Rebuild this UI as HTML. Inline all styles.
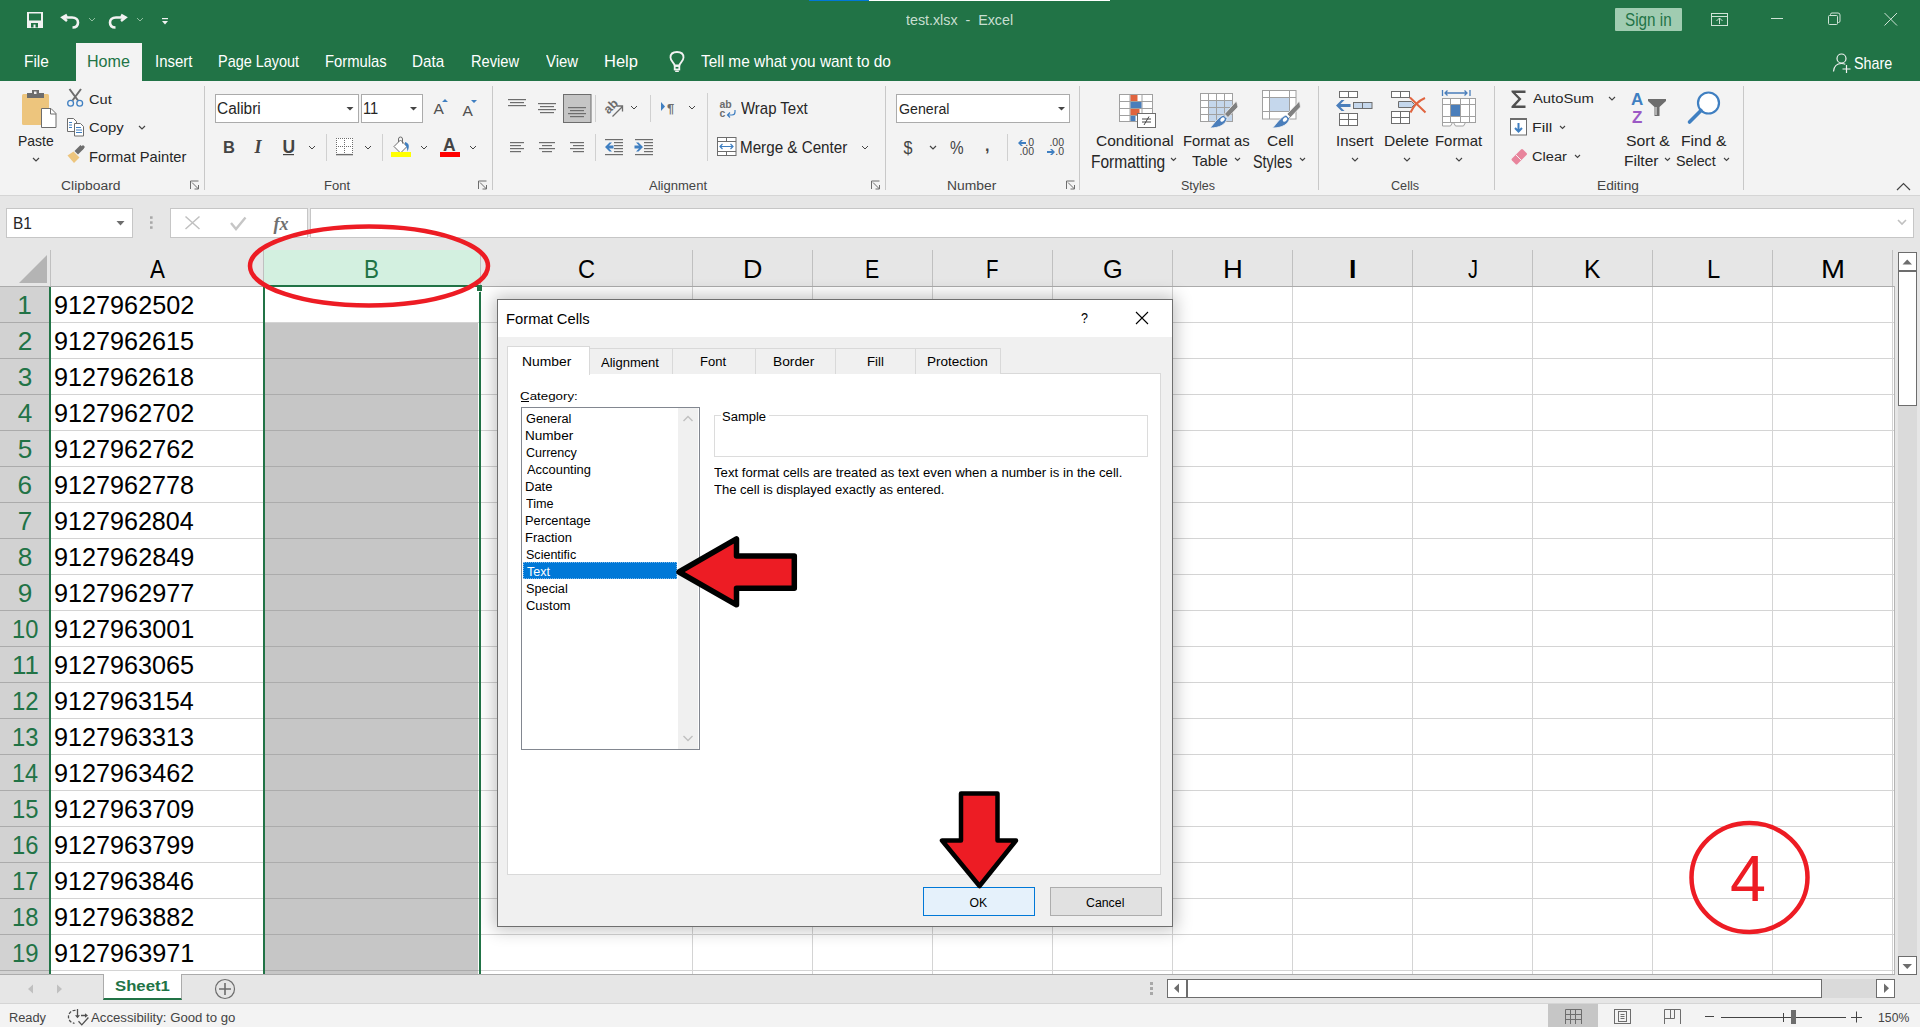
<!DOCTYPE html>
<html><head><meta charset="utf-8"><title>Excel - Format Cells</title>
<style>
html,body{margin:0;padding:0;width:1920px;height:1027px;overflow:hidden;background:#fff;position:relative;font-family:"Liberation Sans",sans-serif}
.t{position:absolute;line-height:0;white-space:nowrap;transform-origin:0 0}
svg{overflow:visible}
</style></head><body>
<div style="position:absolute;left:0px;top:0px;width:1920px;height:81px;background:#217346;"></div>
<div style="position:absolute;left:809px;top:0px;width:60px;height:1px;background:#0078d7;"></div>
<div style="position:absolute;left:869px;top:0px;width:241px;height:1px;background:#ffffff;"></div>
<div style="position:absolute;left:76px;top:43px;width:66px;height:38px;background:#f3f3f3;"></div>
<div style="position:absolute;left:1615px;top:8px;width:67px;height:23px;background:#a0ccb1;border-radius:1px"></div>
<div style="position:absolute;left:0px;top:81px;width:1920px;height:114px;background:#f3f3f3;"></div>
<div style="position:absolute;left:0px;top:195px;width:1920px;height:1px;background:#d5d5d5;"></div>
<div style="position:absolute;left:204px;top:86px;width:1px;height:104px;background:#c8c8c8;"></div>
<div style="position:absolute;left:492px;top:86px;width:1px;height:104px;background:#c8c8c8;"></div>
<div style="position:absolute;left:885px;top:86px;width:1px;height:104px;background:#c8c8c8;"></div>
<div style="position:absolute;left:1079px;top:86px;width:1px;height:104px;background:#c8c8c8;"></div>
<div style="position:absolute;left:1318px;top:86px;width:1px;height:104px;background:#c8c8c8;"></div>
<div style="position:absolute;left:1494px;top:86px;width:1px;height:104px;background:#c8c8c8;"></div>
<div style="position:absolute;left:1743px;top:86px;width:1px;height:104px;background:#c8c8c8;"></div>
<div style="position:absolute;left:215px;top:94px;width:142px;height:27px;background:#fff;border:1px solid #ababab"></div>
<div style="position:absolute;left:361px;top:94px;width:60px;height:27px;background:#fff;border:1px solid #ababab"></div>
<div style="position:absolute;left:896px;top:94px;width:172px;height:27px;background:#fff;border:1px solid #ababab"></div>
<div style="position:absolute;left:0px;top:196px;width:1920px;height:91px;background:#e6e6e6;"></div>
<div style="position:absolute;left:6px;top:208px;width:125px;height:28px;background:#fff;border:1px solid #c6c6c6"></div>
<div style="position:absolute;left:170px;top:208px;width:136px;height:28px;background:#fff;border:1px solid #c6c6c6"></div>
<div style="position:absolute;left:310px;top:208px;width:1602px;height:28px;background:#fff;border:1px solid #c6c6c6"></div>
<div style="position:absolute;left:50px;top:287px;width:1844px;height:687px;background:#ffffff;"></div>
<div style="position:absolute;left:0px;top:287px;width:49px;height:687px;background:#d2d2d2;"></div>
<div style="position:absolute;left:264px;top:250px;width:216px;height:36px;background:#d3f0e0;"></div>
<div style="position:absolute;left:265px;top:323px;width:213px;height:651px;background:#c6c6c6;"></div>
<div style="position:absolute;left:263px;top:250px;width:1px;height:36px;background:#c0c0c0;"></div>
<div style="position:absolute;left:480px;top:250px;width:1px;height:36px;background:#c0c0c0;"></div>
<div style="position:absolute;left:692px;top:250px;width:1px;height:36px;background:#c0c0c0;"></div>
<div style="position:absolute;left:812px;top:250px;width:1px;height:36px;background:#c0c0c0;"></div>
<div style="position:absolute;left:932px;top:250px;width:1px;height:36px;background:#c0c0c0;"></div>
<div style="position:absolute;left:1052px;top:250px;width:1px;height:36px;background:#c0c0c0;"></div>
<div style="position:absolute;left:1172px;top:250px;width:1px;height:36px;background:#c0c0c0;"></div>
<div style="position:absolute;left:1292px;top:250px;width:1px;height:36px;background:#c0c0c0;"></div>
<div style="position:absolute;left:1412px;top:250px;width:1px;height:36px;background:#c0c0c0;"></div>
<div style="position:absolute;left:1532px;top:250px;width:1px;height:36px;background:#c0c0c0;"></div>
<div style="position:absolute;left:1652px;top:250px;width:1px;height:36px;background:#c0c0c0;"></div>
<div style="position:absolute;left:1772px;top:250px;width:1px;height:36px;background:#c0c0c0;"></div>
<div style="position:absolute;left:1892px;top:250px;width:1px;height:36px;background:#c0c0c0;"></div>
<div style="position:absolute;left:50px;top:250px;width:1px;height:36px;background:#c0c0c0;"></div>
<div style="position:absolute;left:0px;top:286px;width:1894px;height:1px;background:#ababab;"></div>
<div style="position:absolute;left:263px;top:287px;width:1px;height:687px;background:#d4d4d4;"></div>
<div style="position:absolute;left:480px;top:287px;width:1px;height:687px;background:#d4d4d4;"></div>
<div style="position:absolute;left:692px;top:287px;width:1px;height:687px;background:#d4d4d4;"></div>
<div style="position:absolute;left:812px;top:287px;width:1px;height:687px;background:#d4d4d4;"></div>
<div style="position:absolute;left:932px;top:287px;width:1px;height:687px;background:#d4d4d4;"></div>
<div style="position:absolute;left:1052px;top:287px;width:1px;height:687px;background:#d4d4d4;"></div>
<div style="position:absolute;left:1172px;top:287px;width:1px;height:687px;background:#d4d4d4;"></div>
<div style="position:absolute;left:1292px;top:287px;width:1px;height:687px;background:#d4d4d4;"></div>
<div style="position:absolute;left:1412px;top:287px;width:1px;height:687px;background:#d4d4d4;"></div>
<div style="position:absolute;left:1532px;top:287px;width:1px;height:687px;background:#d4d4d4;"></div>
<div style="position:absolute;left:1652px;top:287px;width:1px;height:687px;background:#d4d4d4;"></div>
<div style="position:absolute;left:1772px;top:287px;width:1px;height:687px;background:#d4d4d4;"></div>
<div style="position:absolute;left:1892px;top:287px;width:1px;height:687px;background:#d4d4d4;"></div>
<div style="position:absolute;left:50px;top:322px;width:1844px;height:1px;background:#d4d4d4;"></div>
<div style="position:absolute;left:0px;top:322px;width:49px;height:1px;background:#ababab;"></div>
<div style="position:absolute;left:50px;top:358px;width:1844px;height:1px;background:#d4d4d4;"></div>
<div style="position:absolute;left:0px;top:358px;width:49px;height:1px;background:#ababab;"></div>
<div style="position:absolute;left:50px;top:394px;width:1844px;height:1px;background:#d4d4d4;"></div>
<div style="position:absolute;left:0px;top:394px;width:49px;height:1px;background:#ababab;"></div>
<div style="position:absolute;left:50px;top:430px;width:1844px;height:1px;background:#d4d4d4;"></div>
<div style="position:absolute;left:0px;top:430px;width:49px;height:1px;background:#ababab;"></div>
<div style="position:absolute;left:50px;top:466px;width:1844px;height:1px;background:#d4d4d4;"></div>
<div style="position:absolute;left:0px;top:466px;width:49px;height:1px;background:#ababab;"></div>
<div style="position:absolute;left:50px;top:502px;width:1844px;height:1px;background:#d4d4d4;"></div>
<div style="position:absolute;left:0px;top:502px;width:49px;height:1px;background:#ababab;"></div>
<div style="position:absolute;left:50px;top:538px;width:1844px;height:1px;background:#d4d4d4;"></div>
<div style="position:absolute;left:0px;top:538px;width:49px;height:1px;background:#ababab;"></div>
<div style="position:absolute;left:50px;top:574px;width:1844px;height:1px;background:#d4d4d4;"></div>
<div style="position:absolute;left:0px;top:574px;width:49px;height:1px;background:#ababab;"></div>
<div style="position:absolute;left:50px;top:610px;width:1844px;height:1px;background:#d4d4d4;"></div>
<div style="position:absolute;left:0px;top:610px;width:49px;height:1px;background:#ababab;"></div>
<div style="position:absolute;left:50px;top:646px;width:1844px;height:1px;background:#d4d4d4;"></div>
<div style="position:absolute;left:0px;top:646px;width:49px;height:1px;background:#ababab;"></div>
<div style="position:absolute;left:50px;top:682px;width:1844px;height:1px;background:#d4d4d4;"></div>
<div style="position:absolute;left:0px;top:682px;width:49px;height:1px;background:#ababab;"></div>
<div style="position:absolute;left:50px;top:718px;width:1844px;height:1px;background:#d4d4d4;"></div>
<div style="position:absolute;left:0px;top:718px;width:49px;height:1px;background:#ababab;"></div>
<div style="position:absolute;left:50px;top:754px;width:1844px;height:1px;background:#d4d4d4;"></div>
<div style="position:absolute;left:0px;top:754px;width:49px;height:1px;background:#ababab;"></div>
<div style="position:absolute;left:50px;top:790px;width:1844px;height:1px;background:#d4d4d4;"></div>
<div style="position:absolute;left:0px;top:790px;width:49px;height:1px;background:#ababab;"></div>
<div style="position:absolute;left:50px;top:826px;width:1844px;height:1px;background:#d4d4d4;"></div>
<div style="position:absolute;left:0px;top:826px;width:49px;height:1px;background:#ababab;"></div>
<div style="position:absolute;left:50px;top:862px;width:1844px;height:1px;background:#d4d4d4;"></div>
<div style="position:absolute;left:0px;top:862px;width:49px;height:1px;background:#ababab;"></div>
<div style="position:absolute;left:50px;top:898px;width:1844px;height:1px;background:#d4d4d4;"></div>
<div style="position:absolute;left:0px;top:898px;width:49px;height:1px;background:#ababab;"></div>
<div style="position:absolute;left:50px;top:934px;width:1844px;height:1px;background:#d4d4d4;"></div>
<div style="position:absolute;left:0px;top:934px;width:49px;height:1px;background:#ababab;"></div>
<div style="position:absolute;left:50px;top:970px;width:1844px;height:1px;background:#d4d4d4;"></div>
<div style="position:absolute;left:0px;top:970px;width:49px;height:1px;background:#ababab;"></div>
<div style="position:absolute;left:265px;top:358px;width:213px;height:1px;background:#ababab;"></div>
<div style="position:absolute;left:265px;top:394px;width:213px;height:1px;background:#ababab;"></div>
<div style="position:absolute;left:265px;top:430px;width:213px;height:1px;background:#ababab;"></div>
<div style="position:absolute;left:265px;top:466px;width:213px;height:1px;background:#ababab;"></div>
<div style="position:absolute;left:265px;top:502px;width:213px;height:1px;background:#ababab;"></div>
<div style="position:absolute;left:265px;top:538px;width:213px;height:1px;background:#ababab;"></div>
<div style="position:absolute;left:265px;top:574px;width:213px;height:1px;background:#ababab;"></div>
<div style="position:absolute;left:265px;top:610px;width:213px;height:1px;background:#ababab;"></div>
<div style="position:absolute;left:265px;top:646px;width:213px;height:1px;background:#ababab;"></div>
<div style="position:absolute;left:265px;top:682px;width:213px;height:1px;background:#ababab;"></div>
<div style="position:absolute;left:265px;top:718px;width:213px;height:1px;background:#ababab;"></div>
<div style="position:absolute;left:265px;top:754px;width:213px;height:1px;background:#ababab;"></div>
<div style="position:absolute;left:265px;top:790px;width:213px;height:1px;background:#ababab;"></div>
<div style="position:absolute;left:265px;top:826px;width:213px;height:1px;background:#ababab;"></div>
<div style="position:absolute;left:265px;top:862px;width:213px;height:1px;background:#ababab;"></div>
<div style="position:absolute;left:265px;top:898px;width:213px;height:1px;background:#ababab;"></div>
<div style="position:absolute;left:265px;top:934px;width:213px;height:1px;background:#ababab;"></div>
<div style="position:absolute;left:265px;top:970px;width:213px;height:1px;background:#ababab;"></div>
<div style="position:absolute;left:1894px;top:286px;width:1px;height:689px;background:#b4b4b4;"></div>
<div style="position:absolute;left:49px;top:287px;width:2px;height:687px;background:#217346;"></div>
<div style="position:absolute;left:263px;top:286px;width:2px;height:688px;background:#217346;"></div>
<div style="position:absolute;left:479px;top:292px;width:2px;height:682px;background:#217346;"></div>
<div style="position:absolute;left:264px;top:285px;width:216px;height:2px;background:#217346;"></div>
<div style="position:absolute;left:477px;top:285px;width:5px;height:6px;background:#217346;"></div>
<svg style="position:absolute;left:0;top:250px" width="50" height="36"><polygon points="19,33 47,33 47,5" fill="#b4b4b4"/></svg>
<div style="position:absolute;left:0px;top:974px;width:1895px;height:1px;background:#ababab;"></div>
<div style="position:absolute;left:0px;top:975px;width:1920px;height:28px;background:#e6e6e6;"></div>
<div style="position:absolute;left:0px;top:1003px;width:1920px;height:1px;background:#d5d5d5;"></div>
<div style="position:absolute;left:0px;top:1004px;width:1920px;height:23px;background:#f3f3f3;"></div>
<div style="position:absolute;left:103px;top:974px;width:77px;height:24px;background:#fff;border-left:1px solid #ababab;border-right:1px solid #ababab;border-bottom:2px solid #217346"></div>
<div style="position:absolute;left:1548px;top:1004px;width:50px;height:23px;background:#c6c6c6;"></div>
<div style="position:absolute;left:1895px;top:250px;width:25px;height:725px;background:#e6e6e6;"></div>
<div style="position:absolute;left:1898px;top:252px;width:17px;height:17px;background:#fff;border:1px solid #6d6d6d"></div>
<div style="position:absolute;left:1898px;top:271px;width:17px;height:133px;background:#fff;border:1px solid #6d6d6d"></div>
<div style="position:absolute;left:1898px;top:406px;width:19px;height:550px;background:#dadada;"></div>
<div style="position:absolute;left:1898px;top:956px;width:17px;height:17px;background:#fff;border:1px solid #6d6d6d"></div>
<div style="position:absolute;left:1167px;top:979px;width:728px;height:19px;background:#dadada;"></div>
<div style="position:absolute;left:1167px;top:979px;width:653px;height:17px;background:#fff;border:1px solid #6d6d6d"></div>
<div style="position:absolute;left:1186px;top:979px;width:2px;height:19px;background:#6d6d6d;"></div>
<div style="position:absolute;left:1876px;top:979px;width:17px;height:17px;background:#fff;border:1px solid #6d6d6d"></div>
<div style="position:absolute;left:497px;top:299px;width:674px;height:626px;background:#f0f0f0;border:1px solid #6f6f6f;box-shadow:0 0 16px 3px rgba(0,0,0,0.24)"></div>
<div style="position:absolute;left:498px;top:300px;width:674px;height:37px;background:#ffffff;"></div>
<div style="position:absolute;left:507px;top:373px;width:652px;height:500px;background:#fff;border:1px solid #d9d9d9"></div>
<div style="position:absolute;left:589px;top:348px;width:82px;height:25px;background:#f0f0f0;border:1px solid #d9d9d9;border-bottom:none"></div>
<div style="position:absolute;left:672px;top:348px;width:82px;height:25px;background:#f0f0f0;border:1px solid #d9d9d9;border-bottom:none"></div>
<div style="position:absolute;left:755px;top:348px;width:79px;height:25px;background:#f0f0f0;border:1px solid #d9d9d9;border-bottom:none"></div>
<div style="position:absolute;left:835px;top:348px;width:79px;height:25px;background:#f0f0f0;border:1px solid #d9d9d9;border-bottom:none"></div>
<div style="position:absolute;left:915px;top:348px;width:84px;height:25px;background:#f0f0f0;border:1px solid #d9d9d9;border-bottom:none"></div>
<div style="position:absolute;left:507px;top:346px;width:81px;height:28px;background:#fff;border:1px solid #d9d9d9;border-bottom:none"></div>
<div style="position:absolute;left:521px;top:401px;width:8px;height:1px;background:#000000;"></div>
<div style="position:absolute;left:521px;top:407px;width:177px;height:341px;background:#fff;border:1px solid #828790"></div>
<div style="position:absolute;left:678px;top:408px;width:20px;height:341px;background:#f0f0f0;"></div>
<div style="position:absolute;left:523px;top:562px;width:154px;height:17px;background:#0078d7;"></div>
<div style="position:absolute;left:523px;top:562px;width:152px;height:15px;border:1px dotted #7fb8e8"></div>
<div style="position:absolute;left:714px;top:415px;width:432px;height:40px;border:1px solid #dcdcdc"></div>
<div style="position:absolute;left:721px;top:410px;width:48px;height:10px;background:#ffffff;"></div>
<div style="position:absolute;left:923px;top:887px;width:110px;height:27px;background:#e5f1fb;border:1px solid #0078d7"></div>
<div style="position:absolute;left:1050px;top:887px;width:110px;height:27px;background:#e1e1e1;border:1px solid #adadad"></div>
<svg style="position:absolute;left:0;top:0" width="1920" height="1027">
<!-- QAT -->
<g fill="#f2f2f2">
  <path d="M27,12 h16 v16 h-16 z M29,13.5 v7 h12 v-7 z M31,23 v4.5 h2.5 v-3 h2 v3 h2.5 v-4.5 z" fill-rule="evenodd"/>
</g>
<path d="M67,15 L62.5,17.5 L67,21 M63,17.5 H72 C76,17.5 78,20 78,22.5 C78,25.5 76,27.5 72.5,27.5" fill="none" stroke="#f2f2f2" stroke-width="2.6" stroke-linejoin="miter"/>
<path d="M121,15 L125.5,17.5 L121,21 M125,17.5 H116 C112,17.5 110,20 110,22.5 C110,25.5 112,27.5 115.5,27.5" fill="none" stroke="#f2f2f2" stroke-width="2.6"/>
<path d="M89,18 l3,3 l3,-3 M137,18 l3,3 l3,-3" fill="none" stroke="#90bfa0" stroke-width="1"/>
<rect x="162" y="18" width="6" height="1.2" fill="#f2f2f2"/>
<path d="M162,21 h6 l-3,3.5 z" fill="#f2f2f2"/>
<!-- window buttons -->
<g fill="none" stroke="#cfe3d6" stroke-width="1">
  <rect x="1711.5" y="13.5" width="16" height="12"/>
  <line x1="1711.5" y1="16.5" x2="1727.5" y2="16.5"/>
  <path d="M1719.5,24 v-6 M1716.5,21 l3,-3 l3,3"/>
  <line x1="1771" y1="18.5" x2="1783" y2="18.5"/>
  <rect x="1828.5" y="15.5" width="9" height="9" rx="1"/>
  <path d="M1830.5,15.5 v-1 a1.5,1.5 0 0 1 1.5,-1.5 h6 a2,2 0 0 1 2,2 v6 a1.5,1.5 0 0 1 -1.5,1.5 h-1"/>
  <path d="M1884.5,13 L1897,25.5 M1897,13 L1884.5,25.5"/>
</g>
<!-- lightbulb -->
<g fill="none" stroke="#f2f2f2" stroke-width="1.8">
  <path d="M674.7,65.5 C674,62.5 670.5,61 670.5,57.5 C670.5,53.5 673.5,52 677,52 C680.5,52 683.5,53.5 683.5,57.5 C683.5,61 680,62.5 679.3,65.5 Z"/>
  <rect x="674.7" y="66" width="4.6" height="3.5"/>
</g>
<rect x="675" y="70.5" width="4" height="1.5" rx="0.7" fill="#f2f2f2"/>
<!-- share icon -->
<g fill="none" stroke="#f2f2f2" stroke-width="1.2">
  <circle cx="1841.5" cy="58.5" r="4.5"/>
  <path d="M1833.5,71.5 C1834,66 1837,63.5 1841.5,63.5 C1843,63.5 1844.3,63.8 1845.3,64.3"/>
  <path d="M1846.5,65 v8 M1842.5,69 h8"/>
</g>

<!-- ===== Clipboard ===== -->
<rect x="22" y="94" width="27" height="31" rx="1.5" fill="#edc57d"/>
<rect x="27" y="93" width="17" height="5" fill="#6d6d6d"/>
<rect x="32" y="90" width="7" height="4" fill="#6d6d6d"/>
<rect x="34" y="91.5" width="2.5" height="2.5" fill="#f3f3f3"/>
<path d="M41.5,108.5 h9.5 l5,5 v14 h-14.5 z" fill="#fff" stroke="#6d6d6d" stroke-width="1"/>
<path d="M50.5,108.5 v5.5 h5.5" fill="none" stroke="#6d6d6d" stroke-width="1"/>
<path d="M33,158 l3,3 l3,-3" fill="none" stroke="#444" stroke-width="1.2"/>
<!-- cut -->
<path d="M69.5,89 L78,100.5 M81,89 L72.5,100.5" stroke="#6d6d6d" stroke-width="2"/>
<circle cx="70.6" cy="103.3" r="2.9" fill="none" stroke="#3f7fc1" stroke-width="1.3"/>
<circle cx="79.7" cy="103.3" r="2.9" fill="none" stroke="#3f7fc1" stroke-width="1.3"/>
<!-- copy -->
<path d="M67.5,118.5 h6 l3,3 v10 h-9 z" fill="#fff" stroke="#6d6d6d" stroke-width="1"/>
<path d="M74.5,123.5 h6 l3,3 v9.5 h-9 z" fill="#fff" stroke="#6d6d6d" stroke-width="1"/>
<path d="M69,122.5 h3 M69,125 h3 M69,127.5 h3 M76,127.5 h5 M76,130 h6 M76,132.5 h6" stroke="#3f7fc1" stroke-width="1"/>
<!-- format painter -->
<path d="M73.5,151.5 L79.5,157.5 L74,163 L67.5,155.5 Z" fill="#edc57d"/>
<path d="M74.5,151 L80.5,145 L84,148.5 L78,154.5 Z" fill="#6d6d6d"/>
<path d="M80,148 L83,145 L85,147 L82,150 Z" fill="#6d6d6d"/>
<!-- launchers -->
<g fill="none" stroke="#6d6d6d" stroke-width="1">
  <path d="M190.5,189 v-8 h8 M192,182.5 l6.5,6.5 M194.5,189 h4 v-4"/>
  <path d="M478.5,189 v-8 h8 M480,182.5 l6.5,6.5 M482.5,189 h4 v-4"/>
  <path d="M871.5,189 v-8 h8 M873,182.5 l6.5,6.5 M875.5,189 h4 v-4"/>
  <path d="M1066.5,189 v-8 h8 M1068,182.5 l6.5,6.5 M1070.5,189 h4 v-4"/>
</g>

<!-- ===== Font ===== -->
<path d="M346.5,107 h7 l-3.5,3.5 z" fill="#444"/>
<path d="M410,107 h7 l-3.5,3.5 z" fill="#444"/>
<path d="M442,102 l3,-3 l3,3 z M471,100 h6 l-3,3 z" fill="#3f7fc1"/>
<text x="433.5" y="114" font-family="Liberation Sans" font-size="15.5" fill="#505050">A</text>
<text x="462.5" y="115.5" font-family="Liberation Sans" font-size="15.5" fill="#505050">A</text>
<text x="223" y="153" font-family="Liberation Sans" font-weight="bold" font-size="16.5" fill="#444">B</text>
<text x="254.5" y="153" font-family="Liberation Serif" font-style="italic" font-weight="bold" font-size="18" fill="#444">I</text>
<text x="282.5" y="153" font-family="Liberation Sans" font-weight="bold" font-size="17.5" fill="#444">U</text>
<rect x="283" y="154" width="11" height="1.2" fill="#444"/>
<g fill="none" stroke="#444" stroke-width="1">
  <path d="M309,146 l3,3 l3,-3 M365,146 l3,3 l3,-3 M421,146 l3,3 l3,-3 M470,146 l3,3 l3,-3"/>
</g>
<rect x="326" y="134" width="1" height="27" fill="#d0d0d0"/>
<rect x="382" y="134" width="1" height="27" fill="#d0d0d0"/>
<!-- borders -->
<rect x="336" y="138" width="17" height="15" fill="#fff"/>
<g fill="#6d6d6d">
<path d="M336,138h1v1h-1zM338,138h1v1h-1zM340,138h1v1h-1zM342,138h1v1h-1zM344,138h1v1h-1zM346,138h1v1h-1zM348,138h1v1h-1zM350,138h1v1h-1zM352,138h1v1h-1z"/>
<path d="M336,146h1v1h-1zM338,146h1v1h-1zM340,146h1v1h-1zM342,146h1v1h-1zM344,146h1v1h-1zM346,146h1v1h-1zM348,146h1v1h-1zM350,146h1v1h-1zM352,146h1v1h-1z"/>
<path d="M336,140h1v1h-1zM336,142h1v1h-1zM336,144h1v1h-1zM336,148h1v1h-1zM336,150h1v1h-1zM336,152h1v1h-1z"/>
<path d="M344,140h1v1h-1zM344,142h1v1h-1zM344,144h1v1h-1zM344,148h1v1h-1zM344,150h1v1h-1zM344,152h1v1h-1z"/>
<path d="M352,140h1v1h-1zM352,142h1v1h-1zM352,144h1v1h-1zM352,148h1v1h-1zM352,150h1v1h-1zM352,152h1v1h-1z"/>
</g>
<rect x="336" y="154" width="17" height="1.3" fill="#6d6d6d"/>
<!-- fill color -->
<path d="M394,146.5 L400.5,140 L407,146.5 L400.5,153 Z" fill="#fff" stroke="#6d6d6d" stroke-width="1"/>
<path d="M398.5,142 v-3 a2,2 0 0 1 4,0 v4.5" fill="none" stroke="#6d6d6d" stroke-width="1"/>
<path d="M405,142 C409,143 410,146 407.5,151.5 C407,148 406.5,146 405,144.5 Z" fill="#3f7fc1"/>
<rect x="391" y="152" width="20" height="5" fill="#ffff00"/>
<!-- font color -->
<text x="443" y="151" font-family="Liberation Sans" font-weight="bold" font-size="17.5" fill="#444">A</text>
<rect x="440" y="152" width="20" height="5" fill="#ff0000"/>

<!-- ===== Alignment ===== -->
<g fill="#6d6d6d">
  <rect x="508" y="99" width="18" height="1.2"/><rect x="510" y="102" width="14" height="1.2"/><rect x="508" y="105" width="18" height="1.2"/>
  <rect x="538" y="103" width="18" height="1.2"/><rect x="540" y="106" width="14" height="1.2"/><rect x="538" y="109" width="18" height="1.2"/><rect x="540" y="112" width="14" height="1.2"/>
</g>
<rect x="563.5" y="94.5" width="27.5" height="28" fill="#c5c5c5" stroke="#6d6d6d" stroke-width="1"/>
<g fill="#6d6d6d">
  <rect x="568" y="107" width="18" height="1.2"/><rect x="570" y="110" width="14" height="1.2"/><rect x="568" y="113" width="18" height="1.2"/><rect x="570" y="116" width="14" height="1.2"/>
  <rect x="510" y="142" width="14" height="1.2"/><rect x="510" y="145" width="11" height="1.2"/><rect x="510" y="148" width="14" height="1.2"/><rect x="510" y="151" width="11" height="1.2"/>
  <rect x="539" y="142" width="16" height="1.2"/><rect x="542" y="145" width="10" height="1.2"/><rect x="539" y="148" width="16" height="1.2"/><rect x="542" y="151" width="10" height="1.2"/>
  <rect x="570" y="142" width="14" height="1.2"/><rect x="573" y="145" width="11" height="1.2"/><rect x="570" y="148" width="14" height="1.2"/><rect x="573" y="151" width="11" height="1.2"/>
</g>
<rect x="595" y="95" width="1" height="27" fill="#d0d0d0"/>
<rect x="595" y="134" width="1" height="27" fill="#d0d0d0"/>
<rect x="650" y="95" width="1" height="27" fill="#d0d0d0"/>
<rect x="707" y="93" width="1" height="68" fill="#d0d0d0"/>
<!-- orientation -->
<text x="0" y="0" font-family="Liberation Sans" font-weight="bold" font-size="12.5" fill="#6d6d6d" transform="translate(608.5,114.5) rotate(-45)">ab</text>
<path d="M612.5,116.5 L622.5,106.5 M617,106 h5.5 v5.5" fill="none" stroke="#6d6d6d" stroke-width="1.3"/>
<g fill="none" stroke="#444" stroke-width="1">
  <path d="M631,106 l3,3 l3,-3 M689,106 l3,3 l3,-3 M862,146 l3,3 l3,-3"/>
</g>
<!-- rtl -->
<path d="M661,102 l4,4.5 l-4,4.5 z" fill="#3f7fc1"/>
<text x="667" y="113" font-family="Liberation Sans" font-weight="bold" font-size="13" fill="#6d6d6d">¶</text>
<!-- wrap text -->
<text x="719.5" y="108" font-family="Liberation Sans" font-weight="bold" font-size="10.5" fill="#6d6d6d">ab</text>
<text x="719.5" y="116.5" font-family="Liberation Sans" font-weight="bold" font-size="10.5" fill="#6d6d6d">c</text>
<path d="M735,110 v2 a3,3 0 0 1 -3,3 h-4 M730,112.5 l-2.5,2.5 l2.5,2.5" fill="none" stroke="#3f7fc1" stroke-width="1.2"/>
<!-- indent -->
<g fill="#6d6d6d">
  <rect x="605" y="139" width="18" height="1.2"/><rect x="614" y="142" width="9" height="1.2"/><rect x="614" y="145" width="9" height="1.2"/><rect x="614" y="148" width="9" height="1.2"/><rect x="614" y="151" width="9" height="1.2"/><rect x="605" y="154" width="18" height="1.2"/>
  <rect x="635" y="139" width="18" height="1.2"/><rect x="644" y="142" width="9" height="1.2"/><rect x="644" y="145" width="9" height="1.2"/><rect x="644" y="148" width="9" height="1.2"/><rect x="644" y="151" width="9" height="1.2"/><rect x="635" y="154" width="18" height="1.2"/>
</g>
<path d="M605,147 l4.5,-4.5 h2.5 l-3,3 h4.5 v3 h-4.5 l3,3 h-2.5 z" fill="#3f7fc1"/>
<path d="M643,147 l-4.5,-4.5 h-2.5 l3,3 h-4.5 v3 h4.5 l-3,3 h2.5 z" fill="#3f7fc1"/>
<!-- merge -->
<rect x="717.5" y="137.5" width="18.5" height="18" fill="#fff" stroke="#6d6d6d" stroke-width="1"/>
<path d="M717.5,141.5 h18.5 M717.5,151.5 h18.5 M726.5,137.5 v4 M726.5,151.5 v4" stroke="#6d6d6d" stroke-width="1"/>
<path d="M720,146.5 h13 M722.5,144 l-2.5,2.5 l2.5,2.5 M730.5,144 l2.5,2.5 l-2.5,2.5" fill="none" stroke="#3f7fc1" stroke-width="1.2"/>

<!-- ===== Number ===== -->
<path d="M1058,107 h7 l-3.5,3.5 z" fill="#444"/>
<text x="903.5" y="154.5" font-family="Liberation Sans" font-size="19" fill="#444" transform="translate(903.5 0) scale(0.85 1) translate(-903.5 0)">$</text>
<text x="950" y="154" font-family="Liberation Sans" font-size="18" fill="#444" transform="translate(950 0) scale(0.85 1) translate(-950 0)">%</text>
<text x="985" y="151" font-family="Liberation Sans" font-weight="bold" font-size="16" fill="#444">,</text>
<path d="M930,146 l3,3 l3,-3" fill="none" stroke="#444" stroke-width="1.2"/>
<rect x="1007" y="134" width="1" height="27" fill="#d0d0d0"/>
<text x="1034" y="146" text-anchor="end" font-family="Liberation Sans" font-size="10.5" fill="#444">.0</text>
<text x="1034" y="155" text-anchor="end" font-family="Liberation Sans" font-size="10.5" fill="#444">.00</text>
<path d="M1018,143 l3,-3 h2 l-2,2 h5 v2 h-5 l2,2 h-2 z" fill="#3f7fc1"/>
<text x="1064" y="146" text-anchor="end" font-family="Liberation Sans" font-size="10.5" fill="#444">.00</text>
<text x="1064" y="155" text-anchor="end" font-family="Liberation Sans" font-size="10.5" fill="#444">.0</text>
<path d="M1055,152 l-3,-3 h-2 l2,2 h-5 v2 h5 l-2,2 h2 z" fill="#3f7fc1"/>

<!-- ===== Styles ===== -->
<!-- conditional formatting -->
<rect x="1119.5" y="94.5" width="33" height="27" fill="#fff" stroke="#a0a0a0" stroke-width="1"/>
<path d="M1130,94.5 v27 M1142,94.5 v27 M1119.5,101.5 h33 M1119.5,108.5 h33 M1119.5,115.5 h33" stroke="#a0a0a0" stroke-width="1"/>
<rect x="1130.5" y="95" width="7" height="6" fill="#e0643f"/>
<rect x="1130.5" y="102" width="11" height="6" fill="#4a7ebb"/>
<rect x="1130.5" y="109" width="9" height="6" fill="#e0643f"/>
<rect x="1130.5" y="116" width="5" height="5" fill="#4a7ebb"/>
<rect x="1137.5" y="113.5" width="18" height="14" fill="#fff" stroke="#6d6d6d" stroke-width="1"/>
<path d="M1142,119 h9 M1142,122 h9 M1144,125 l5,-8.5" stroke="#444" stroke-width="1"/>
<!-- format as table -->
<rect x="1200.5" y="93.5" width="32" height="28" fill="#fff" stroke="#a0a0a0" stroke-width="1"/>
<rect x="1208.5" y="100.5" width="24" height="21" fill="#c5d7ec"/>
<path d="M1208.5,93.5 v28 M1216.5,93.5 v28 M1224.5,93.5 v28 M1200.5,100.5 h32 M1200.5,107.5 h32 M1200.5,114.5 h32" stroke="#a0a0a0" stroke-width="1"/>
<rect x="1200.5" y="93.5" width="32" height="28" fill="none" stroke="#a0a0a0" stroke-width="1"/>
<path d="M1236.5,101 L1238,107 L1228,117.5 L1224.5,114 Z" fill="#808080" stroke="#f3f3f3" stroke-width="0.8"/>
<path d="M1223.5,115 L1227,118.5 C1226,124 1220,128 1210,128 C1214,124 1217,118 1223.5,115 Z" fill="#4a7ebb" stroke="#f3f3f3" stroke-width="0.8"/>
<ellipse cx="1222.5" cy="119.5" rx="1.8" ry="2.6" fill="#fff" transform="rotate(45 1222.5 119.5)"/>
<!-- cell styles -->
<rect x="1262.5" y="90.5" width="33.5" height="28.5" fill="#fff" stroke="#a0a0a0" stroke-width="1"/>
<rect x="1269.5" y="97.5" width="20" height="14" fill="#c5d7ec"/>
<path d="M1269.5,90.5 v28.5 M1289.5,90.5 v28.5 M1262.5,97.5 h33.5 M1262.5,111.5 h33.5" stroke="#a0a0a0" stroke-width="1"/>
<path d="M1299.5,101 L1300.5,107 L1290.5,117.5 L1287,114 Z" fill="#808080" stroke="#f3f3f3" stroke-width="0.8"/>
<path d="M1286,115 L1289.5,118.5 C1288.5,124 1282.5,128 1272.5,128 C1276.5,124 1279.5,118 1286,115 Z" fill="#4a7ebb" stroke="#f3f3f3" stroke-width="0.8"/>
<ellipse cx="1285" cy="119.5" rx="1.8" ry="2.6" fill="#fff" transform="rotate(45 1285 119.5)"/>
<g fill="none" stroke="#444" stroke-width="1.1">
  <path d="M1171,158 l2.5,2.5 l2.5,-2.5 M1235,158 l2.5,2.5 l2.5,-2.5 M1300,158 l2.5,2.5 l2.5,-2.5"/>
  <path d="M1352,158 l3,3 l3,-3 M1404,158 l3,3 l3,-3 M1456,158 l3,3 l3,-3"/>
</g>

<!-- ===== Cells ===== -->
<g fill="#fff" stroke="#6d6d6d" stroke-width="1">
  <rect x="1339.5" y="91.5" width="18" height="6"/>
  <rect x="1339.5" y="113.5" width="18" height="12"/>
</g>
<path d="M1348.5,91.5 v6 M1348.5,113.5 v12 M1339.5,119.5 h18" stroke="#6d6d6d" stroke-width="1"/>
<rect x="1353.5" y="102.5" width="18.5" height="6" fill="#c5d7ec" stroke="#6d6d6d" stroke-width="1"/>
<path d="M1362.5,102.5 v6" stroke="#6d6d6d" stroke-width="1"/>
<path d="M1336,105.5 l5.5,-5.5 h3 l-4,4 h10 v3 h-10 l4,4 h-3 z" fill="#4a7ebb"/>
<!-- delete -->
<g fill="#fff" stroke="#6d6d6d" stroke-width="1">
  <rect x="1391.5" y="91.5" width="18" height="6"/>
  <rect x="1391.5" y="111.5" width="18" height="12"/>
</g>
<path d="M1400.5,91.5 v6 M1400.5,111.5 v12 M1391.5,117.5 h18" stroke="#6d6d6d" stroke-width="1"/>
<path d="M1398.5,101.5 h13 l3,3 l-3,3 h-13 z" fill="#c5d7ec" stroke="#6d6d6d" stroke-width="1"/>
<path d="M1410,97.5 L1425.5,112.5 M1425,98 C1418,101 1413,107 1410.5,112.5" fill="none" stroke="#e0643f" stroke-width="2"/>
<!-- format -->
<path d="M1442.5,90 v6 M1470,90 v6 M1445,93 h22 M1447.5,90.5 l-2.5,2.5 l2.5,2.5 M1464.5,90.5 l2.5,2.5 l-2.5,2.5" fill="none" stroke="#4a7ebb" stroke-width="1.3"/>
<path d="M1442.5,122.5 v3.5 h8 l2,-3.5 M1453.5,122.5 l2,3.5 h8 l2,-3.5" fill="#fff" stroke="#a0a0a0" stroke-width="1"/>
<rect x="1442.5" y="98.5" width="33" height="24" fill="#fff" stroke="#a0a0a0" stroke-width="1"/>
<path d="M1450.5,98.5 v24 M1460.5,98.5 v24 M1469.5,98.5 v24 M1442.5,104.5 h33 M1442.5,116.5 h33" stroke="#a0a0a0" stroke-width="1"/>
<rect x="1451" y="105" width="9" height="11" fill="#4a7ebb"/>

<!-- ===== Editing ===== -->
<path d="M1511.5,90.5 h14 v2.5 h-10 l6,6 l-6,6.5 h10 v2.5 h-14 v-1.8 l6.8,-7.2 l-6.8,-7 z" fill="#505050"/>
<path d="M1609,97 l3,3 l3,-3 M1560,126 l2.5,2.5 l2.5,-2.5 M1575,155 l2.5,2.5 l2.5,-2.5 M1665,158 l2.5,2.5 l2.5,-2.5 M1724,158 l2.5,2.5 l2.5,-2.5" fill="none" stroke="#444" stroke-width="1.1"/>
<rect x="1510.5" y="118.5" width="16" height="16.5" fill="#fff" stroke="#6d6d6d" stroke-width="1"/>
<rect x="1510" y="118" width="17" height="2" fill="#6d6d6d"/>
<path d="M1518.5,123 v8 M1515,128 l3.5,3.5 l3.5,-3.5" fill="none" stroke="#3f7fc1" stroke-width="2"/>
<path d="M1512,158.5 L1521,149.5 Q1522,148.5 1523,149.5 L1526.5,153 Q1527.5,154 1526.5,155 L1517.5,164 Q1516.5,165 1515.5,164 L1512,160.5 Q1511,159.5 1512,158.5 Z" fill="#e8849c"/>
<path d="M1516,155 l5,5" stroke="#f3f3f3" stroke-width="1"/>
<text x="1631" y="105" font-family="Liberation Sans" font-weight="bold" font-size="17" fill="#3f7fc1">A</text>
<text x="1632" y="123" font-family="Liberation Sans" font-weight="bold" font-size="17" fill="#9b59c5">Z</text>
<path d="M1648,99 h18 v2 l-6.5,6 v9 h-5 v-9 l-6.5,-6 z" fill="#6d6d6d"/>
<path d="M1656,107 v8" stroke="#f3f3f3" stroke-width="1"/>
<circle cx="1708.5" cy="103" r="10.5" fill="#fff" stroke="#3f7fc1" stroke-width="2.2"/>
<path d="M1701,110.5 L1689.5,122" stroke="#3f7fc1" stroke-width="3.6" stroke-linecap="round"/>
<!-- collapse caret -->
<path d="M1897,190 l6.5,-6.5 l6.5,6.5" fill="none" stroke="#444" stroke-width="1.2"/>

<!-- ===== Formula bar ===== -->
<path d="M116.5,221 h8 l-4,4.5 z" fill="#6d6d6d"/>
<rect x="150" y="216.3" width="2.6" height="2.5" fill="#a8a8a8"/><rect x="150" y="221.3" width="2.6" height="2.5" fill="#a8a8a8"/><rect x="150" y="226.3" width="2.6" height="2.5" fill="#a8a8a8"/>
<path d="M185.5,216.5 l14,12.5 M199.5,216.5 l-14,12.5" stroke="#c0c0c0" stroke-width="1.5"/>
<path d="M231,223 l5,6 l9.5,-11.5" fill="none" stroke="#c6c6c6" stroke-width="2.4"/>
<text x="273.5" y="229.5" font-family="Liberation Serif" font-style="italic" font-weight="bold" font-size="18" fill="#707070">fx</text>
<path d="M1898,220 l4,4 l4,-4" fill="none" stroke="#c0c0c0" stroke-width="1.6"/>

<!-- ===== scroll arrows ===== -->
<path d="M1902.5,264.5 h9.5 l-4.75,-5 z" fill="#6d6d6d"/>
<path d="M1902.5,964 h9.5 l-4.75,5 z" fill="#6d6d6d"/>
<path d="M1179,983.5 v9.5 l-5,-4.75 z" fill="#6d6d6d"/>
<path d="M1884,983.5 v9.5 l5,-4.75 z" fill="#6d6d6d"/>
<rect x="1150" y="982" width="3" height="3" fill="#a8a8a8"/><rect x="1150" y="987" width="3" height="3" fill="#a8a8a8"/><rect x="1150" y="992" width="3" height="3" fill="#a8a8a8"/>
<!-- sheet nav -->
<path d="M33,984.5 l-5,4.5 l5,4.5 z" fill="#c0c0c0"/>
<path d="M57,984.5 l5,4.5 l-5,4.5 z" fill="#c0c0c0"/>
<circle cx="225" cy="989" r="9.5" fill="none" stroke="#6d6d6d" stroke-width="1.2"/>
<path d="M225,983 v12 M219,989 h12" stroke="#6d6d6d" stroke-width="1.6"/>
<!-- status: accessibility icon -->
<path d="M75.5,1010.3 A6.5,6.5 0 0 0 74.5,1023.3" fill="none" stroke="#505050" stroke-width="1.3" stroke-dasharray="3,1.6"/>
<path d="M77.5,1009 v7 M81,1015.5 h4.5 M78.5,1021.3 l3.3,3.6 l6.6,-7.4" fill="none" stroke="#505050" stroke-width="1.3"/>
<path d="M75,1015.3 h5 l-2.5,3 z M85,1013.2 l3,2.3 l-3,2.3 z" fill="#505050"/>
<!-- view icons -->
<g fill="none" stroke="#6d6d6d" stroke-width="1">
  <path d="M1565.5,1024 v-14.5 h16 v14.5 M1565.5,1014.5 h16 M1565.5,1019.5 h16 M1570.5,1009.5 v14.5 M1575.5,1009.5 v14.5"/>
  <rect x="1614.5" y="1009.5" width="16" height="14"/>
  <rect x="1618.5" y="1011.5" width="8" height="10"/>
  <path d="M1620.5,1014.5 h4 M1620.5,1016.5 h4 M1620.5,1018.5 h4"/>
  <path d="M1664.5,1024 v-14.5 h16 v14.5 M1664.5,1018.5 h10 v-9 M1670.5,1009.5 v9"/>
</g>
<path d="M1705,1016.5 h9 M1721,1017.5 h125 M1851,1017.5 h11 M1856.5,1011.5 v11 M1783.5,1013 v9" fill="none" stroke="#444" stroke-width="1"/>
<rect x="1791" y="1010" width="5" height="14" fill="#6d6d6d"/>

<!-- dialog close X -->
<path d="M1136,312 L1148,324 M1148,312 L1136,324" stroke="#000" stroke-width="1.1"/>
<!-- listbox scroll chevrons -->
<path d="M683.5,421 l4.5,-4.5 l4.5,4.5" fill="none" stroke="#c0c0c0" stroke-width="1.4"/>
<path d="M683.5,736 l4.5,4.5 l4.5,-4.5" fill="none" stroke="#c0c0c0" stroke-width="1.4"/>
<!-- copy chevron -->
<path d="M139,126 l3,3 l3,-3" fill="none" stroke="#444" stroke-width="1.2"/>
</svg>

<div class="t" style="left:905.79px;top:20.21px;font-size:15.12px;color:#c8dfd1;transform:scaleX(0.945);">test.xlsx &nbsp;- &nbsp;Excel</div>
<div class="t" style="left:1625.31px;top:20.19px;font-size:18.02px;color:#217346;transform:scaleX(0.846);">Sign in</div>
<div class="t" style="left:23.77px;top:62.01px;font-size:15.70px;color:#ffffff;transform:scaleX(0.983);">File</div>
<div class="t" style="left:86.71px;top:62.01px;font-size:15.70px;color:#217346;transform:scaleX(1.026);">Home</div>
<div class="t" style="left:154.65px;top:62.01px;font-size:15.70px;color:#ffffff;transform:scaleX(0.952);">Insert</div>
<div class="t" style="left:217.84px;top:62.01px;font-size:15.70px;color:#ffffff;transform:scaleX(0.921);">Page Layout</div>
<div class="t" style="left:324.82px;top:62.01px;font-size:15.70px;color:#ffffff;transform:scaleX(0.943);">Formulas</div>
<div class="t" style="left:411.78px;top:62.01px;font-size:15.70px;color:#ffffff;transform:scaleX(0.970);">Data</div>
<div class="t" style="left:470.83px;top:62.01px;font-size:15.70px;color:#ffffff;transform:scaleX(0.935);">Review</div>
<div class="t" style="left:546.00px;top:62.01px;font-size:15.70px;color:#ffffff;transform:scaleX(0.947);">View</div>
<div class="t" style="left:603.68px;top:62.01px;font-size:15.70px;color:#ffffff;transform:scaleX(1.053);">Help</div>
<div class="t" style="left:700.69px;top:62.01px;font-size:15.70px;color:#ffffff;transform:scaleX(0.981);">Tell me what you want to do</div>
<div class="t" style="left:1854.36px;top:63.70px;font-size:16.57px;color:#ffffff;transform:scaleX(0.865);">Share</div>
<div class="t" style="left:61.30px;top:186.23px;font-size:12.21px;color:#444444;transform:scaleX(1.139);">Clipboard</div>
<div class="t" style="left:323.96px;top:186.23px;font-size:12.21px;color:#444444;transform:scaleX(1.067);">Font</div>
<div class="t" style="left:649.00px;top:186.23px;font-size:12.21px;color:#444444;transform:scaleX(1.069);">Alignment</div>
<div class="t" style="left:946.89px;top:186.23px;font-size:12.21px;color:#444444;transform:scaleX(1.135);">Number</div>
<div class="t" style="left:1181.44px;top:186.23px;font-size:12.21px;color:#444444;transform:scaleX(1.023);">Styles</div>
<div class="t" style="left:1391.37px;top:186.23px;font-size:12.21px;color:#444444;transform:scaleX(1.035);">Cells</div>
<div class="t" style="left:1596.90px;top:186.23px;font-size:12.21px;color:#444444;transform:scaleX(1.123);">Editing</div>
<div class="t" style="left:17.88px;top:141.21px;font-size:15.12px;color:#262626;transform:scaleX(0.923);">Paste</div>
<div class="t" style="left:89.27px;top:99.72px;font-size:13.66px;color:#262626;transform:scaleX(1.071);">Cut</div>
<div class="t" style="left:89.26px;top:127.72px;font-size:13.66px;color:#262626;transform:scaleX(1.089);">Copy</div>
<div class="t" style="left:88.82px;top:157.21px;font-size:15.12px;color:#262626;transform:scaleX(0.974);">Format Painter</div>
<div class="t" style="left:217.23px;top:109.45px;font-size:15.84px;color:#262626;transform:scaleX(0.976);">Calibri</div>
<div class="t" style="left:363.40px;top:109.45px;font-size:15.84px;color:#262626;transform:scaleX(0.929);">11</div>
<div class="t" style="left:741.00px;top:108.70px;font-size:16.57px;color:#262626;transform:scaleX(0.903);">Wrap Text</div>
<div class="t" style="left:739.78px;top:147.70px;font-size:16.57px;color:#262626;transform:scaleX(0.918);">Merge &amp; Center</div>
<div class="t" style="left:899.29px;top:109.41px;font-size:14.53px;color:#262626;transform:scaleX(0.978);">General</div>
<div class="t" style="left:1096.22px;top:141.21px;font-size:15.12px;color:#262626;transform:scaleX(1.028);">Conditional</div>
<div class="t" style="left:1090.76px;top:162.19px;font-size:18.02px;color:#262626;transform:scaleX(0.861);">Formatting</div>
<div class="t" style="left:1182.81px;top:141.21px;font-size:15.12px;color:#262626;transform:scaleX(0.980);">Format as</div>
<div class="t" style="left:1191.70px;top:161.21px;font-size:15.12px;color:#262626;transform:scaleX(0.994);">Table</div>
<div class="t" style="left:1267.22px;top:141.21px;font-size:15.12px;color:#262626;transform:scaleX(1.027);">Cell</div>
<div class="t" style="left:1253.35px;top:162.19px;font-size:18.02px;color:#262626;transform:scaleX(0.798);">Styles</div>
<div class="t" style="left:1335.65px;top:141.21px;font-size:15.12px;color:#262626;transform:scaleX(0.989);">Insert</div>
<div class="t" style="left:1383.76px;top:141.21px;font-size:15.12px;color:#262626;transform:scaleX(1.027);">Delete</div>
<div class="t" style="left:1434.81px;top:141.21px;font-size:15.12px;color:#262626;transform:scaleX(0.987);">Format</div>
<div class="t" style="left:1533.00px;top:98.72px;font-size:13.66px;color:#262626;transform:scaleX(1.084);">AutoSum</div>
<div class="t" style="left:1531.73px;top:127.72px;font-size:13.66px;color:#262626;transform:scaleX(1.161);">Fill</div>
<div class="t" style="left:1532.27px;top:156.72px;font-size:13.66px;color:#262626;transform:scaleX(1.070);">Clear</div>
<div class="t" style="left:1626.29px;top:141.21px;font-size:15.12px;color:#262626;transform:scaleX(1.045);">Sort &amp;</div>
<div class="t" style="left:1623.76px;top:161.21px;font-size:15.12px;color:#262626;transform:scaleX(1.025);">Filter</div>
<div class="t" style="left:1680.74px;top:141.21px;font-size:15.12px;color:#262626;transform:scaleX(1.040);">Find &amp;</div>
<div class="t" style="left:1676.36px;top:161.21px;font-size:15.12px;color:#262626;transform:scaleX(0.945);">Select</div>
<div class="t" style="left:12.76px;top:223.70px;font-size:16.57px;color:#262626;transform:scaleX(0.935);">B1</div>
<div class="t" style="left:149.50px;top:269.34px;font-size:26.16px;color:#000000;transform:scaleX(0.856);">A</div>
<div class="t" style="left:364.21px;top:269.34px;font-size:26.16px;color:#217346;transform:scaleX(0.857);">B</div>
<div class="t" style="left:577.82px;top:269.34px;font-size:26.16px;color:#000000;transform:scaleX(0.903);">C</div>
<div class="t" style="left:742.85px;top:269.34px;font-size:26.16px;color:#000000;transform:scaleX(1.028);">D</div>
<div class="t" style="left:865.10px;top:269.34px;font-size:26.16px;color:#000000;transform:scaleX(0.814);">E</div>
<div class="t" style="left:986.27px;top:269.34px;font-size:26.16px;color:#000000;transform:scaleX(0.780);">F</div>
<div class="t" style="left:1102.73px;top:269.34px;font-size:26.16px;color:#000000;transform:scaleX(0.969);">G</div>
<div class="t" style="left:1222.81px;top:269.34px;font-size:26.16px;color:#000000;transform:scaleX(1.049);">H</div>
<div class="t" style="left:1346.61px;top:269.34px;font-size:26.16px;color:#000000;transform:scaleX(1.567);">I</div>
<div class="t" style="left:1467.70px;top:269.34px;font-size:26.16px;color:#000000;transform:scaleX(0.764);">J</div>
<div class="t" style="left:1584.03px;top:269.34px;font-size:26.16px;color:#000000;transform:scaleX(0.942);">K</div>
<div class="t" style="left:1706.69px;top:269.34px;font-size:26.16px;color:#000000;transform:scaleX(0.910);">L</div>
<div class="t" style="left:1820.69px;top:269.34px;font-size:26.16px;color:#000000;transform:scaleX(1.104);">M</div>
<div class="t" style="left:53.86px;top:305.34px;font-size:26.16px;color:#000000;transform:scaleX(0.964);">9127962502</div>
<div class="t" style="left:17.35px;top:305.34px;font-size:26.16px;color:#217346;">1</div>
<div class="t" style="left:53.87px;top:341.34px;font-size:26.16px;color:#000000;transform:scaleX(0.963);">9127962615</div>
<div class="t" style="left:17.67px;top:341.34px;font-size:26.16px;color:#217346;">2</div>
<div class="t" style="left:53.87px;top:377.34px;font-size:26.16px;color:#000000;transform:scaleX(0.963);">9127962618</div>
<div class="t" style="left:17.81px;top:377.34px;font-size:26.16px;color:#217346;">3</div>
<div class="t" style="left:53.86px;top:413.34px;font-size:26.16px;color:#000000;transform:scaleX(0.964);">9127962702</div>
<div class="t" style="left:17.81px;top:413.34px;font-size:26.16px;color:#217346;">4</div>
<div class="t" style="left:53.86px;top:449.34px;font-size:26.16px;color:#000000;transform:scaleX(0.964);">9127962762</div>
<div class="t" style="left:17.74px;top:449.34px;font-size:26.16px;color:#217346;">5</div>
<div class="t" style="left:53.87px;top:485.34px;font-size:26.16px;color:#000000;transform:scaleX(0.963);">9127962778</div>
<div class="t" style="left:17.61px;top:485.34px;font-size:26.16px;color:#217346;">6</div>
<div class="t" style="left:53.87px;top:521.34px;font-size:26.16px;color:#000000;transform:scaleX(0.961);">9127962804</div>
<div class="t" style="left:17.67px;top:521.34px;font-size:26.16px;color:#217346;">7</div>
<div class="t" style="left:53.86px;top:557.34px;font-size:26.16px;color:#000000;transform:scaleX(0.964);">9127962849</div>
<div class="t" style="left:17.74px;top:557.34px;font-size:26.16px;color:#217346;">8</div>
<div class="t" style="left:53.86px;top:593.34px;font-size:26.16px;color:#000000;transform:scaleX(0.964);">9127962977</div>
<div class="t" style="left:17.74px;top:593.34px;font-size:26.16px;color:#217346;">9</div>
<div class="t" style="left:53.86px;top:629.34px;font-size:26.16px;color:#000000;transform:scaleX(0.964);">9127963001</div>
<div class="t" style="left:12.02px;top:629.34px;font-size:26.16px;color:#217346;transform:scaleX(0.905);">10</div>
<div class="t" style="left:53.87px;top:665.34px;font-size:26.16px;color:#000000;transform:scaleX(0.963);">9127963065</div>
<div class="t" style="left:11.86px;top:665.34px;font-size:26.16px;color:#217346;transform:scaleX(0.988);">11</div>
<div class="t" style="left:53.87px;top:701.34px;font-size:26.16px;color:#000000;transform:scaleX(0.961);">9127963154</div>
<div class="t" style="left:12.01px;top:701.34px;font-size:26.16px;color:#217346;transform:scaleX(0.914);">12</div>
<div class="t" style="left:53.87px;top:737.34px;font-size:26.16px;color:#000000;transform:scaleX(0.963);">9127963313</div>
<div class="t" style="left:12.02px;top:737.34px;font-size:26.16px;color:#217346;transform:scaleX(0.909);">13</div>
<div class="t" style="left:53.86px;top:773.34px;font-size:26.16px;color:#000000;transform:scaleX(0.964);">9127963462</div>
<div class="t" style="left:12.04px;top:773.34px;font-size:26.16px;color:#217346;transform:scaleX(0.896);">14</div>
<div class="t" style="left:53.86px;top:809.34px;font-size:26.16px;color:#000000;transform:scaleX(0.964);">9127963709</div>
<div class="t" style="left:12.02px;top:809.34px;font-size:26.16px;color:#217346;transform:scaleX(0.909);">15</div>
<div class="t" style="left:53.86px;top:845.34px;font-size:26.16px;color:#000000;transform:scaleX(0.964);">9127963799</div>
<div class="t" style="left:12.02px;top:845.34px;font-size:26.16px;color:#217346;transform:scaleX(0.909);">16</div>
<div class="t" style="left:53.87px;top:881.34px;font-size:26.16px;color:#000000;transform:scaleX(0.963);">9127963846</div>
<div class="t" style="left:12.01px;top:881.34px;font-size:26.16px;color:#217346;transform:scaleX(0.914);">17</div>
<div class="t" style="left:53.86px;top:917.34px;font-size:26.16px;color:#000000;transform:scaleX(0.964);">9127963882</div>
<div class="t" style="left:12.02px;top:917.34px;font-size:26.16px;color:#217346;transform:scaleX(0.909);">18</div>
<div class="t" style="left:53.86px;top:953.34px;font-size:26.16px;color:#000000;transform:scaleX(0.964);">9127963971</div>
<div class="t" style="left:12.01px;top:953.34px;font-size:26.16px;color:#217346;transform:scaleX(0.914);">19</div>
<div class="t" style="left:114.58px;top:986.21px;font-size:15.12px;color:#217346;font-weight:bold;transform:scaleX(1.107);">Sheet1</div>
<div class="t" style="left:8.98px;top:1018.23px;font-size:12.21px;color:#444444;transform:scaleX(1.049);">Ready</div>
<div class="t" style="left:91.00px;top:1018.23px;font-size:12.21px;color:#444444;transform:scaleX(1.081);">Accessibility: Good to go</div>
<div class="t" style="left:1878.08px;top:1018.23px;font-size:12.21px;color:#444444;">150%</div>
<div class="t" style="left:505.82px;top:319.21px;font-size:15.12px;color:#000000;transform:scaleX(0.977);">Format Cells</div>
<div class="t" style="left:1080.50px;top:318.21px;font-size:15.12px;color:#000000;transform:scaleX(0.827);">?</div>
<div class="t" style="left:521.89px;top:362.23px;font-size:12.21px;color:#000000;transform:scaleX(1.135);">Number</div>
<div class="t" style="left:601.00px;top:362.63px;font-size:11.92px;color:#000000;transform:scaleX(1.095);">Alignment</div>
<div class="t" style="left:699.96px;top:362.23px;font-size:12.21px;color:#000000;transform:scaleX(1.067);">Font</div>
<div class="t" style="left:772.90px;top:362.23px;font-size:12.21px;color:#000000;transform:scaleX(1.126);">Border</div>
<div class="t" style="left:866.94px;top:362.23px;font-size:12.21px;color:#000000;transform:scaleX(1.082);">Fill</div>
<div class="t" style="left:926.92px;top:362.23px;font-size:12.21px;color:#000000;transform:scaleX(1.108);">Protection</div>
<div class="t" style="left:520.33px;top:395.74px;font-size:10.76px;color:#000000;transform:scaleX(1.240);">Category:</div>
<div class="t" style="left:525.86px;top:419.23px;font-size:12.21px;color:#000000;transform:scaleX(1.044);">General</div>
<div class="t" style="left:525.41px;top:436.23px;font-size:12.21px;color:#000000;transform:scaleX(1.111);">Number</div>
<div class="t" style="left:525.87px;top:453.23px;font-size:12.21px;color:#000000;transform:scaleX(1.026);">Currency</div>
<div class="t" style="left:526.50px;top:470.23px;font-size:12.21px;color:#000000;transform:scaleX(1.058);">Accounting</div>
<div class="t" style="left:525.46px;top:487.23px;font-size:12.21px;color:#000000;transform:scaleX(1.065);">Date</div>
<div class="t" style="left:526.25px;top:504.23px;font-size:12.21px;color:#000000;transform:scaleX(1.037);">Time</div>
<div class="t" style="left:525.47px;top:521.23px;font-size:12.21px;color:#000000;transform:scaleX(1.050);">Percentage</div>
<div class="t" style="left:525.46px;top:538.23px;font-size:12.21px;color:#000000;transform:scaleX(1.064);">Fraction</div>
<div class="t" style="left:525.94px;top:555.23px;font-size:12.21px;color:#000000;transform:scaleX(1.027);">Scientific</div>
<div class="t" style="left:526.95px;top:572.23px;font-size:12.21px;color:#ffffff;transform:scaleX(1.027);">Text</div>
<div class="t" style="left:525.93px;top:589.23px;font-size:12.21px;color:#000000;transform:scaleX(1.043);">Special</div>
<div class="t" style="left:525.85px;top:606.23px;font-size:12.21px;color:#000000;transform:scaleX(1.062);">Custom</div>
<div class="t" style="left:722.41px;top:417.23px;font-size:12.21px;color:#000000;transform:scaleX(1.066);">Sample</div>
<div class="t" style="left:713.74px;top:473.23px;font-size:12.21px;color:#000000;transform:scaleX(1.081);">Text format cells are treated as text even when a number is in the cell.</div>
<div class="t" style="left:713.74px;top:490.23px;font-size:12.21px;color:#000000;transform:scaleX(1.068);">The cell is displayed exactly as entered.</div>
<div class="t" style="left:969.45px;top:903.23px;font-size:12.21px;color:#000000;">OK</div>
<div class="t" style="left:1086.38px;top:903.23px;font-size:12.21px;color:#000000;transform:scaleX(1.010);">Cancel</div>
<div class="t" style="left:1729.71px;top:878.61px;font-size:65.41px;color:#ed1c24;transform:scaleX(0.989);">4</div>
<svg style="position:absolute;left:0;top:0" width="1920" height="1027">
<ellipse cx="369" cy="266" rx="119" ry="39.5" fill="none" stroke="#ed1c24" stroke-width="4.5"/>
<ellipse cx="1749.5" cy="877.5" rx="58" ry="54.5" fill="none" stroke="#ed1c24" stroke-width="4.5"/>
<polygon points="679,572 736.5,538.8 736.5,556 794.3,556 794.3,588.3 736.5,588.3 736.5,604.8" fill="#ed1c24" stroke="#000" stroke-width="5.5" stroke-linejoin="round"/>
<polygon points="961,793.5 997.5,793.5 997.5,840.5 1016,840.5 979.5,886 942,840.5 961,840.5" fill="#ed1c24" stroke="#000" stroke-width="4.5" stroke-linejoin="round"/>
</svg>

</body></html>
